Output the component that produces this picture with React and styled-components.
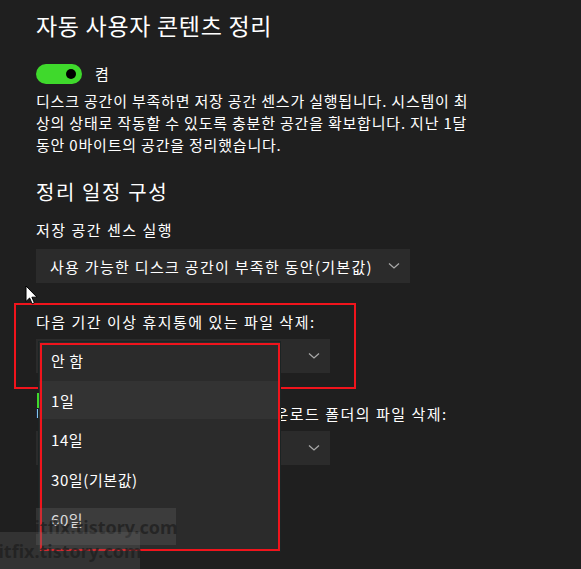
import React from "react";
import styled, { createGlobalStyle } from "styled-components";

const Global = createGlobalStyle`
  html, body { margin: 0; padding: 0; background: #1f1f1f; }
  body { font-family: "Noto Sans CJK KR", "Noto Sans", sans-serif; color: #fff; }
`;

const Page = styled.div`
  position: relative;
  width: 581px;
  height: 569px;
  overflow: hidden;
  background: #1f1f1f;
  padding: 8px 0 0 36px;
  box-sizing: border-box;
  display: flex;
  flex-direction: column;
`;

const Title = styled.h1`
  margin: 0;
  font-size: 23px;
  font-weight: 400;
  line-height: 34px;
  letter-spacing: 0.7px;
`;

const ToggleRow = styled.div`
  display: flex;
  align-items: center;
  gap: 13px;
  margin-top: 21px;
  font-size: 15px;
`;

const Toggle = styled.div`
  width: 46px;
  height: 20px;
  border-radius: 10px;
  background: #3fd92c;
  display: flex;
  align-items: center;
  justify-content: flex-end;
  padding-right: 6px;
  box-sizing: border-box;
`;

const Knob = styled.div`
  width: 10px;
  height: 10px;
  border-radius: 50%;
  background: #000;
`;

const Desc = styled.p`
  margin: 6px 0 0;
  font-size: 15px;
  line-height: 22px;
  letter-spacing: 0.8px;
`;

const Section = styled.h2`
  margin: 21px 0 0;
  font-size: 20px;
  font-weight: 400;
  line-height: 29px;
  letter-spacing: 1.6px;
`;

const Label = styled.div`
  margin-top: ${(p) => p.$mt || 0}px;
  font-size: 15px;
  line-height: 22px;
  letter-spacing: 1.5px;
  white-space: nowrap;
`;

const Combo = styled.div`
  margin-top: ${(p) => p.$mt || 0}px;
  width: ${(p) => p.$w}px;
  height: 34px;
  background: #2b2b2b;
  display: flex;
  align-items: center;
  justify-content: space-between;
  padding: 0 10px 0 14px;
  box-sizing: border-box;
  font-size: 15px;
  letter-spacing: 1.3px;
`;

const Chevron = () => (
  <svg width="12" height="8" viewBox="0 0 12 8">
    <path d="M1 1.5 L6 6 L11 1.5" fill="none" stroke="#a8a8a8" strokeWidth="1.3" />
  </svg>
);

const Annot = styled.div`
  position: absolute;
  left: ${(p) => p.$x}px;
  top: ${(p) => p.$y}px;
  width: ${(p) => p.$w}px;
  height: ${(p) => p.$h}px;
  border: 2px solid #f0141c;
  box-sizing: border-box;
  pointer-events: none;
`;

const Popup = styled.div`
  position: absolute;
  left: 38px;
  top: 341px;
  width: 243px;
  height: 211px;
  background: #2b2b2b;
  border: 1px solid #1b2424;
  box-sizing: border-box;
  display: flex;
  flex-direction: column;
`;

const Item = styled.div`
  position: relative;
  height: ${(p) => p.$h || 40}px;
  display: flex;
  align-items: center;
  padding-left: 12px;
  padding-bottom: ${(p) => p.$pb || 0}px;
  box-sizing: border-box;
  font-size: 15px;
  letter-spacing: 0.6px;
  background: ${(p) => (p.$hl ? "#333333" : "transparent")};
`;

const Accent = styled.span`
  position: absolute;
  left: -2px;
  top: 12px;
  width: 2px;
  height: 15px;
  background: #3fd92c;
`;

const Watermark = styled.div`
  position: absolute;
  left: ${(p) => p.$x}px;
  top: ${(p) => p.$y}px;
  width: 140px;
  height: 37px;
  background: rgba(110, 110, 110, 0.25);
  color: rgba(30, 30, 30, 0.75);
  font-family: "Noto Sans", "DejaVu Sans", sans-serif;
  font-weight: 700;
  font-size: 18px;
  display: flex;
  align-items: center;
  justify-content: center;
`;

const Cursor = styled.svg`
  position: absolute;
  left: 25px;
  top: 285px;
`;

export default function App() {
  return (
    <>
      <Global />
      <Page>
        <Title>자동 사용자 콘텐츠 정리</Title>
        <ToggleRow>
          <Toggle>
            <Knob />
          </Toggle>
          <span>켬</span>
        </ToggleRow>
        <Desc>
          디스크 공간이 부족하면 저장 공간 센스가 실행됩니다. 시스템이 최<br />
          상의 상태로 작동할 수 있도록 충분한 공간을 확보합니다. 지난 1달<br />
          동안 0바이트의 공간을 정리했습니다.
        </Desc>
        <Section>정리 일정 구성</Section>
        <Label $mt={13}>저장 공간 센스 실행</Label>
        <Combo $mt={8} $w={374}>
          <span>사용 가능한 디스크 공간이 부족한 동안(기본값)</span>
          <Chevron />
        </Combo>
        <Label $mt={28}>다음 기간 이상 휴지통에 있는 파일 삭제:</Label>
        <Combo $mt={6} $w={294}>
          <span>안 함</span>
          <Chevron />
        </Combo>
        <Label $mt={30}>다음 기간 이상 사용하지 않았던 다운로드 폴더의 파일 삭제:</Label>
        <Combo $mt={6} $w={294}>
          <span>안 함</span>
          <Chevron />
        </Combo>

        <Annot $x={14} $y={303} $w={342} $h={86} />

        <Popup>
          <Item $h={39} $pb={3}>안 함</Item>
          <Item $h={38} $hl>
            <Accent />
            1일
          </Item>
          <Item>14일</Item>
          <Item>30일(기본값)</Item>
          <Item>60일</Item>
        </Popup>
        <Annot $x={40} $y={343} $w={240} $h={208} />

        <Watermark $x={36} $y={508}>itfix.tistory.com</Watermark>
        <Watermark $x={0} $y={532}>itfix.tistory.com</Watermark>

        <Cursor width="14" height="20" viewBox="0 0 14 20">
          <path d="M1 1 L1 16.5 L4.6 13 L7.2 18.8 L9.4 17.8 L6.9 12.2 L12 12.2 Z" fill="#fff" stroke="#000" strokeWidth="1" />
        </Cursor>
      </Page>
    </>
  );
}
